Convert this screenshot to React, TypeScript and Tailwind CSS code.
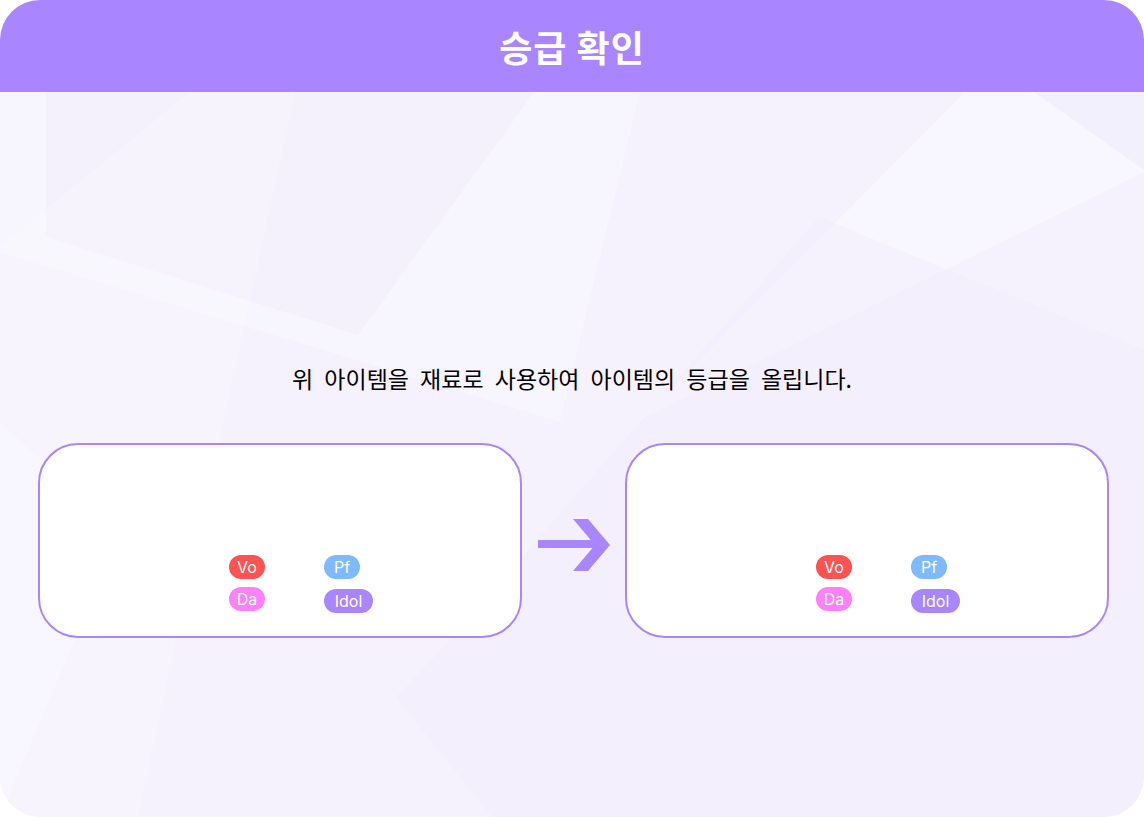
import React from "react";

const badgeBase =
  "h-[24px] rounded-full flex items-center justify-center text-white text-[16px] leading-none";

function Backdrop() {
  return (
    <svg
      className="absolute inset-0 w-full h-full"
      viewBox="0 0 1144 725"
      preserveAspectRatio="none"
      aria-hidden="true"
    >
      <rect width="1144" height="725" fill="#f5f2fe" />
      <polygon points="0,0 640,0 560,330 0,160" fill="#ffffff" opacity="0.25" />
      <polygon points="46,0 534,0 358,243 46,145" fill="#ede7fc" opacity="0.3" />
      <polygon points="0,155 190,0 295,0 138,725 0,725" fill="#ffffff" opacity="0.2" />
      <polygon points="640,328 965,0 1144,0 1144,80" fill="#ffffff" opacity="0.3" />
      <polygon points="819,125 1144,258 1144,725 492,725 396,605 444,555" fill="#efe9fd" opacity="0.25" />
      <polygon points="1034,0 1144,0 1144,78" fill="#ece6fc" opacity="0.35" />
      <polygon points="0,330 120,440 0,725" fill="#ffffff" opacity="0.2" />
    </svg>
  );
}

function Badges() {
  return (
    <div className="grid grid-cols-[95px_60px] gap-y-[8px] pl-[189px]">
      <div className={`${badgeBase} w-[36px] bg-[#ff5252]`}>Vo</div>
      <div className={`${badgeBase} w-[36px] bg-[#7fb9ff]`}>Pf</div>
      <div className={`${badgeBase} w-[36px] bg-[#ff80fb]`}>Da</div>
      <div className={`${badgeBase} w-[49px] mt-[2px] bg-[#a985ff]`}>Idol</div>
    </div>
  );
}

function ItemCard() {
  return (
    <div className="w-[484px] h-[195px] rounded-[40px] border-2 border-[#a985ff] bg-white pt-[110px]">
      <Badges />
    </div>
  );
}

function Arrow() {
  return (
    <svg width="72" height="52" viewBox="0 0 72 52" aria-hidden="true">
      <rect x="0" y="21" width="62" height="8" fill="#a985ff" />
      <polygon points="35,0 50,0 72,26 50,52 35,52 57,26" fill="#a985ff" />
    </svg>
  );
}

export default function App() {
  return (
    <div
      className="w-[1144px] h-[817px] bg-white"
      style={{ fontFamily: '"Inter", "Noto Sans CJK KR", sans-serif' }}
    >
      <div className="relative w-full h-full rounded-[40px] overflow-hidden flex flex-col">
        {/* Header */}
        <div className="h-[92px] shrink-0 bg-[#a985ff] flex items-center justify-center">
          <h1
            className="text-white text-[36px] font-bold tracking-[1px] leading-none"
            style={{ fontFamily: '"Noto Sans CJK KR", sans-serif' }}
          >
            승급 확인
          </h1>
        </div>

        {/* Body */}
        <div className="relative flex-1">
          <Backdrop />
          <div className="relative flex flex-col items-center pt-[268px]">
            <p
              className="text-black text-[23px] leading-[36px] [word-spacing:6px]"
              style={{ fontFamily: '"Noto Sans CJK KR", sans-serif' }}
            >
              위 아이템을 재료로 사용하여 아이템의 등급을 올립니다.
            </p>
          </div>
          <div className="relative flex items-center mt-[47px] pl-[38px]">
            <ItemCard />
            <div className="w-[103px] flex justify-center pt-[9px]">
              <Arrow />
            </div>
            <ItemCard />
          </div>
        </div>
      </div>
    </div>
  );
}
